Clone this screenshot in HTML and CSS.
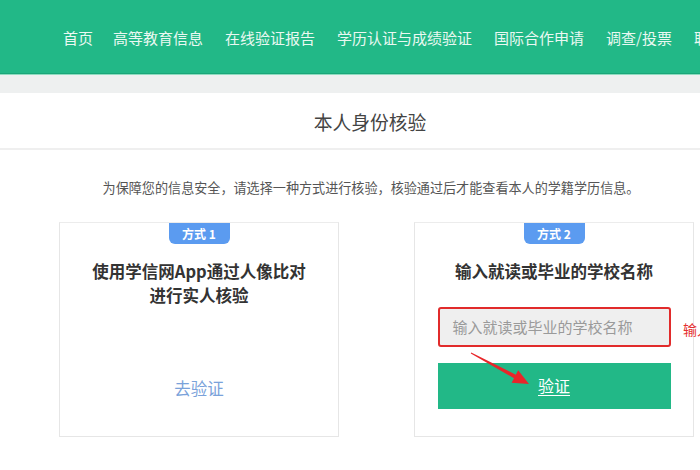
FILE: index.html
```html
<!DOCTYPE html>
<html lang="zh-CN">
<head>
<meta charset="utf-8">
<title>本人身份核验</title>
<link rel="stylesheet" href="styles.css">
</head>
<body>
<header class="topbar">
  <nav class="nav">
    <a class="nav-item first">首页</a>
    <a class="nav-item">高等教育信息</a>
    <a class="nav-item">在线验证报告</a>
    <a class="nav-item">学历认证与成绩验证</a>
    <a class="nav-item">国际合作申请</a>
    <a class="nav-item">调查/投票</a>
    <a class="nav-item">职业测评</a>
  </nav>
</header>
<div class="strip"></div>
<div class="title-panel">
  <h1 class="page-title">本人身份核验</h1>
</div>
<main class="content">
  <p class="intro">为保障您的信息安全，请选择一种方式进行核验，核验通过后才能查看本人的学籍学历信息。</p>
  <div class="cards">
    <section class="card">
      <span class="badge">方式 1</span>
      <h2 class="card-title">使用学信网App通过人像比对<br>进行实人核验</h2>
      <a class="go-link">去验证</a>
    </section>
    <section class="card card-school">
      <span class="badge">方式 2</span>
      <h2 class="card-title">输入就读或毕业的学校名称</h2>
      <div class="school-input">输入就读或毕业的学校名称</div>
      <a class="verify-btn">验证</a>
      <span class="err-tip">输入学校名称</span>
      <svg class="arrow" width="70" height="40" viewBox="0 0 70 40">
        <polygon fill="#e8262a" points="6.2,4.6 50.8,26.7 53.2,22.3 64,36 46.6,34.7 49,30.3 5.8,5.4"/>
      </svg>
    </section>
  </div>
</main>
</body>
</html>
```

FILE: styles.css
```css
html, body {
  margin: 0;
  padding: 0;
}
body {
  width: 700px;
  height: 470px;
  overflow: hidden;
  background: #ffffff;
  font-family: "Noto Sans CJK SC", "Microsoft YaHei", sans-serif;
  color: #333;
}
.topbar {
  height: 73px;
  background: #22b887;
  border-bottom: 1px solid #1aa679;
  box-shadow: 0 1px 0 #8fdcc0;
  display: flex;
  align-items: center;
  overflow: hidden;
}
.nav {
  display: flex;
  gap: 22px;
  padding-left: 63px;
  white-space: nowrap;
  margin-top: 3px;
}
.nav-item {
  font-size: 15px;
  line-height: 20px;
  color: #eaf8f2;
  text-decoration: none;
}
.nav-item.first {
  margin-right: -2px;
}
.strip {
  height: 18px;
  margin-top: 1px;
  background: #eef0f0;
}
.title-panel {
  height: 55px;
  width: 740px;
  display: flex;
  align-items: center;
  justify-content: center;
  border-bottom: 2px solid #efefef;
  background: #fff;
}
.page-title {
  margin: 0;
  font-size: 18.8px;
  font-weight: 400;
  color: #444;
  line-height: 24px;
  margin-top: 3px;
}
.content {
  width: 740px;
}
.intro {
  margin: 28px 0 0;
  text-align: center;
  font-size: 13.1px;
  line-height: 20px;
  color: #555;
  padding-left: 2px;
}
.cards {
  display: flex;
  gap: 75px;
  padding-left: 59px;
  margin-top: 24px;
}
.card {
  position: relative;
  box-sizing: border-box;
  width: 280px;
  height: 215px;
  border: 1px solid #e6e6e6;
  border-top-color: #ececec;
  display: flex;
  flex-direction: column;
  align-items: center;
  background: #fff;
}
.badge {
  width: 61px;
  height: 21px;
  background: #5b9bf0;
  color: #fff;
  font-size: 12px;
  font-weight: 700;
  line-height: 21px;
  text-align: center;
  border-radius: 0 0 6px 6px;
}
.card-title {
  margin: 15px 0 0;
  font-size: 16.5px;
  line-height: 24px;
  font-weight: 700;
  color: #333;
  text-align: center;
}
.go-link {
  margin-top: 69px;
  font-size: 16.5px;
  line-height: 24px;
  color: #7aa2da;
  text-decoration: none;
}
.school-input {
  box-sizing: border-box;
  width: 233px;
  height: 40px;
  margin-top: 24px;
  background: #efefef;
  border: 2px solid #e12b2b;
  border-radius: 3px;
  padding-left: 13px;
  font-size: 15px;
  line-height: 36px;
  color: #9a9a9a;
  white-space: nowrap;
  overflow: hidden;
}
.verify-btn {
  width: 233px;
  height: 46px;
  margin-top: 16px;
  background: #22b887;
  color: #fff;
  font-size: 16px;
  line-height: 44px;
  text-align: center;
  text-decoration: underline;
  text-underline-offset: 3px;
}
.err-tip {
  position: absolute;
  left: 268px;
  top: 96px;
  font-size: 14px;
  line-height: 20px;
  color: #e53030;
  white-space: nowrap;
}
.arrow {
  position: absolute;
  left: 50px;
  top: 125px;
}
```
